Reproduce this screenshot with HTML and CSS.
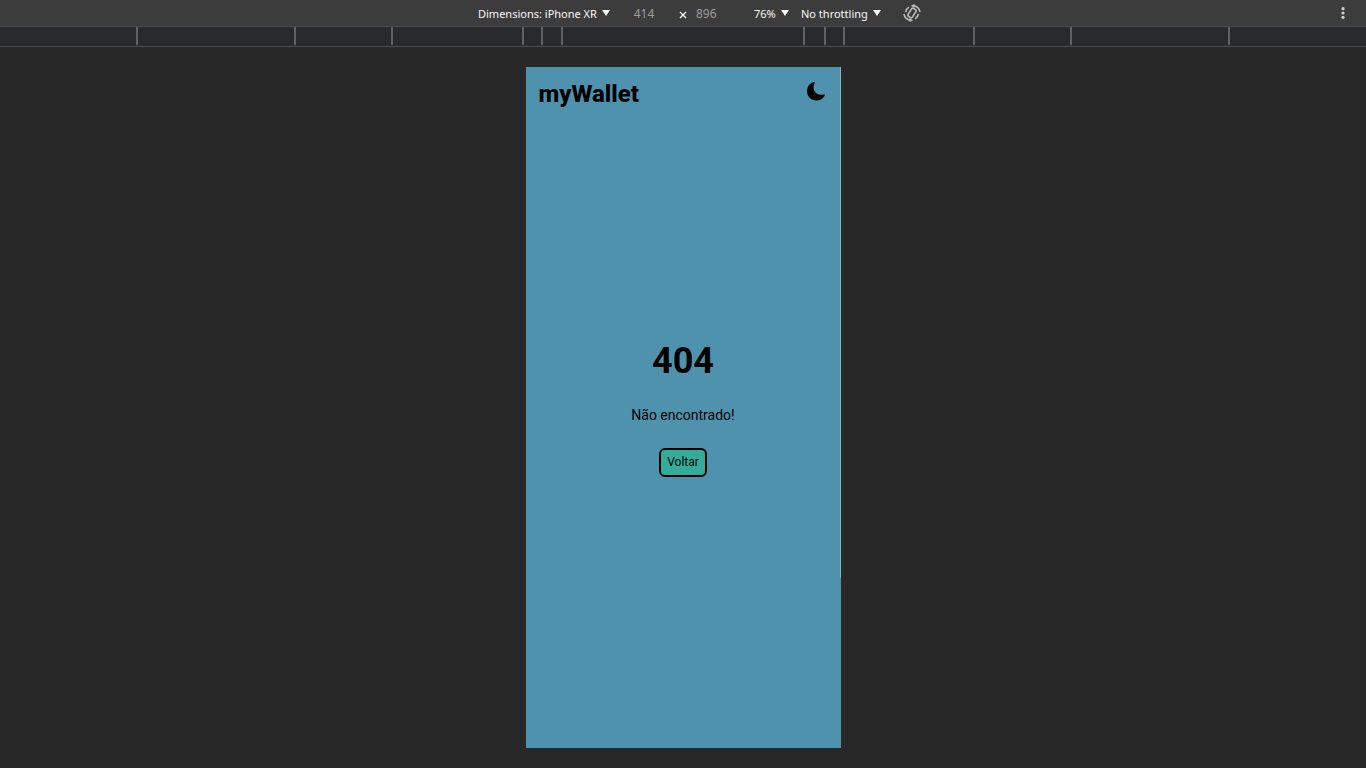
FILE: index.html
```html
<!DOCTYPE html>
<html lang="pt-BR">
<head>
<meta charset="utf-8">
<title>myWallet</title>
<link rel="stylesheet" href="styles.css">
</head>
<body>
<header class="toolbar">
  <div class="controls">
    <label class="picker device">
      <select aria-label="Device"><option>Dimensions: iPhone XR</option></select>
      <svg class="arrow" viewBox="0 0 8 6" aria-hidden="true"><path d="M0 0h8L4 6z"/></svg>
    </label>
    <input class="size width" type="text" value="414" aria-label="Width">
    <span class="times"><svg viewBox="0 0 8 8" aria-hidden="true"><path d="M1 1l6 6M7 1L1 7"/></svg></span>
    <input class="size height" type="text" value="896" aria-label="Height">
    <label class="picker zoom">
      <select aria-label="Zoom"><option>76%</option></select>
      <svg class="arrow" viewBox="0 0 8 6" aria-hidden="true"><path d="M0 0h8L4 6z"/></svg>
    </label>
    <label class="picker throttle">
      <select aria-label="Throttling"><option>No throttling</option></select>
      <svg class="arrow" viewBox="0 0 8 6" aria-hidden="true"><path d="M0 0h8L4 6z"/></svg>
    </label>
    <button class="rotate" type="button" aria-label="Rotate">
      <svg viewBox="0 0 18 18" aria-hidden="true">
        <rect x="6.400" y="4.300" width="5.200" height="9.400" rx="1.400" transform="rotate(33 9 9)"/>
        <path d="M10 1.600c3.700.2 6.700 3 7 6.400M8 16.400C4.300 16.200 1.300 13.400 1 10M2.600 8.200c.3-2.200 1.500-4 3.300-5.100M15.400 9.800c-.3 2.200-1.500 4-3.300 5.100"/>
        <path class="tip" d="M11.500 0v4L7.800 1.800zM6.500 18v-4l3.700 2.200z"/>
      </svg>
    </button>
  </div>
  <button class="more" type="button" aria-label="More options">
    <svg viewBox="0 0 4 12" aria-hidden="true"><circle cx="2" cy="1.700" r="1.600"/><circle cx="2" cy="6" r="1.600"/><circle cx="2" cy="10.300" r="1.600"/></svg>
  </button>
</header>
<div class="ruler">
  <div class="stop laptop-l"><div class="stop laptop"><div class="stop tablet"><div class="stop mobile-l"><div class="stop mobile-m"><div class="stop mobile-s"></div></div></div></div></div></div>
</div>
<main class="stage">
  <section class="phone">
    <div class="app-bar">
      <h1 class="brand">myWallet</h1>
      <button class="theme" type="button" aria-label="Tema escuro">
        <svg viewBox="0 0 18 19" aria-hidden="true"><path d="M7 0C2.700 1 0 4.600 0 9c0 5.400 4.200 9.500 9.300 9.500 3.700 0 7.100-2 8.400-5.300.2-.7-.3-1-.9-.8-5.700 1.500-10.300-2-10.300-7.200 0-1.600.4-2.900 1.200-4.200C8 .4 7.700-.1 7 0z"/></svg>
      </button>
    </div>
    <div class="message">
      <h2 class="code">404</h2>
      <p class="text">Não encontrado!</p>
      <button class="back" type="button">Voltar</button>
    </div>
  </section>
</main>
</body>
</html>
```
FILE: styles.css
```css
* { box-sizing: border-box; }
body {
  margin: 0;
  min-height: 100vh;
  display: flex;
  flex-direction: column;
  background: #282828;
  color: #000;
  font-family: Roboto, sans-serif;
}
h1, h2, p { margin: 0; }
button, select, input {
  margin: 0;
  padding: 0;
  border: 0;
  background: none;
  color: inherit;
  font: inherit;
}
svg { display: block; }

.toolbar {
  display: flex;
  align-items: center;
  height: 27px;
  border-bottom: 1px solid #4a4c50;
  background: #3c3c3c;
  color: #f8f8f8;
  font: 12px/18px "Noto Sans", "Open Sans", sans-serif;
}
.controls {
  flex: 1;
  display: flex;
  align-items: center;
  justify-content: center;
  padding-left: 33px;
}
.picker { display: flex; align-items: center; gap: 5px; font-size: 11px; }
.picker select { appearance: none; padding-top: 2px; }
.device { width: 140px; }
.zoom { width: 47px; }
.throttle { width: 102px; }
.arrow { width: 8px; height: 6px; flex: none; fill: #f8f8f8; }
.size { padding-top: 2px; color: #9c9c9c; }
.width { width: 52px; text-align: center; }
.height { width: 58px; }
.times { width: 26px; padding-top: 4px; }
.times svg { width: 8px; height: 8px; margin: 0 auto; fill: none; stroke: #f8f8f8; stroke-width: 1.4; }
.rotate svg { width: 18px; height: 18px; fill: none; stroke: #bcbcbc; stroke-width: 1.6; }
.rotate .tip { fill: #bcbcbc; stroke: none; }
.more { width: 46px; margin-left: -46px; }
.more svg { width: 4px; height: 12px; margin: 0 auto; fill: #cfcfcf; }

.ruler {
  display: flex;
  justify-content: center;
  height: 20px;
  padding-bottom: 1px;
  border-bottom: 1px solid #4a4c50;
  background: #292a2c;
}
.stop {
  display: flex;
  flex: none;
  justify-content: center;
  border: solid #606164;
  border-width: 0 2px;
}
.laptop-l { width: 1094px; }
.laptop { width: 778px; }
.tablet { width: 584px; }
.mobile-l { width: 323px; }
.mobile-m { width: 285px; }
.mobile-s { width: 244px; }

.stage {
  flex: 1;
  display: flex;
  justify-content: center;
  padding: 20px;
}
.phone {
  position: relative;
  display: flex;
  flex-direction: column;
  width: 315px;
  background: #4f92ae;
}
.phone::after {
  content: "";
  position: absolute;
  top: 0;
  right: 0;
  width: 1px;
  height: 75%;
  background: #88b5c5;
}
.app-bar {
  display: flex;
  justify-content: space-between;
  align-items: center;
  height: 54px;
  padding: 0 16px 0 13px;
}
.brand { font-size: 24px; line-height: 28px; font-weight: 800; }
.theme { padding-bottom: 6px; }
.theme svg { width: 18px; height: 19px; }
.message {
  flex: 1;
  display: flex;
  flex-direction: column;
  align-items: center;
  justify-content: center;
  gap: 24px;
  padding-bottom: 52px;
}
.code { font-size: 36px; line-height: 42px; }
.text { font-size: 14px; line-height: 18px; }
.back {
  padding: 5px 6px;
  border: 2px solid #000;
  border-radius: 6px;
  background: #34ac9a;
  font-size: 12px;
  line-height: 15px;
}
```
